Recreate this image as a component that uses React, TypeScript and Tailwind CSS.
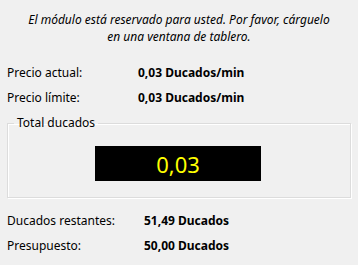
import React from "react";

type Row = { label: string; value: string };

const priceRows: Row[] = [
  { label: "Precio actual:", value: "0,03 Ducados/min" },
  { label: "Precio límite:", value: "0,03 Ducados/min" },
];

const budgetRows: Row[] = [
  { label: "Ducados restantes:", value: "51,49 Ducados" },
  { label: "Presupuesto:", value: "50,00 Ducados" },
];

const InfoRow = ({ label, value, labelWidth }: Row & { labelWidth: string }) => (
  <div className="flex h-[25px] items-center pl-[7px]">
    <span className={labelWidth}>{label}</span>
    <span className="font-bold">{value}</span>
  </div>
);

export default function App() {
  return (
    <div className="h-[265px] w-[358px] overflow-hidden bg-[#f0f0f0] font-['Noto_Sans',sans-serif] text-[12px] text-black">
      <div className="h-[60px] pt-[11px] text-center italic leading-[17px]">
        <p>El módulo está reservado para usted. Por favor, cárguelo</p>
        <p>en una ventana de tablero.</p>
      </div>

      {priceRows.map((row) => (
        <InfoRow key={row.label} {...row} labelWidth="w-[131px]" />
      ))}

      <fieldset className="mx-[7px] mt-[5px] border border-[#dcdcdc] pb-[16px] shadow-[inset_1px_1px_0_#fff,1px_1px_0_#fff]">
        <legend className="ml-[6px] px-[3px] leading-[16px]">Total ducados</legend>
        <div className="ml-[87px] mt-[15px] flex h-[35px] w-[166px] items-center justify-center bg-black text-[22px] leading-none text-[#ffff00]">
          0,03
        </div>
      </fieldset>

      <div className="mt-[10px]">
        {budgetRows.map((row) => (
          <InfoRow key={row.label} {...row} labelWidth="w-[137px]" />
        ))}
      </div>
    </div>
  );
}
